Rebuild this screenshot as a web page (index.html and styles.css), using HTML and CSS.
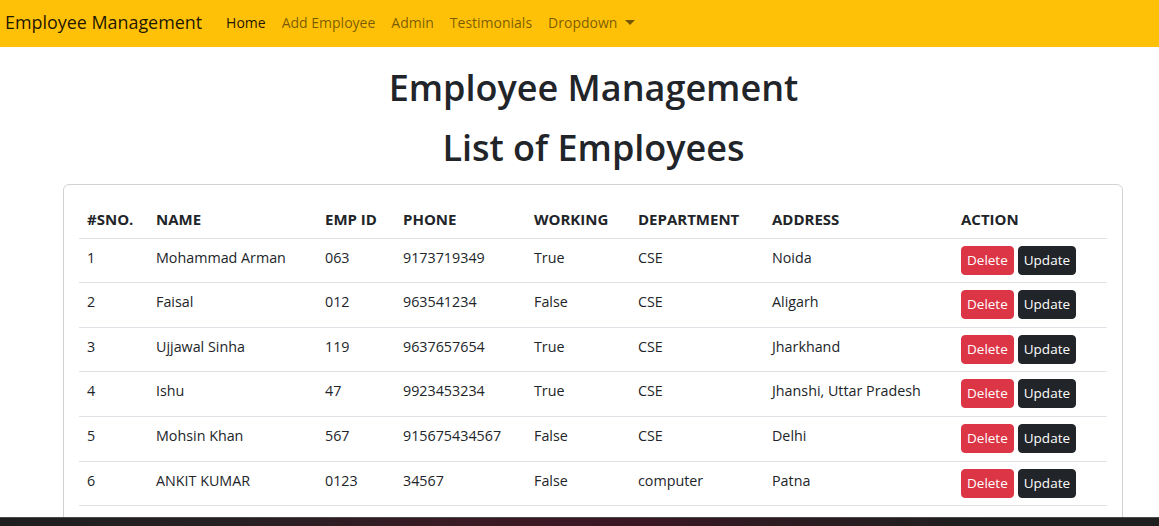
FILE: index.html
```html
<!DOCTYPE html>
<html lang="en">
<head>
<meta charset="utf-8">
<title>Employee Management</title>
<link rel="stylesheet" href="styles.css">
</head>
<body>
<nav class="navbar">
  <a class="brand" href="#">Employee Management</a>
  <ul class="nav">
    <li><a class="nav-link active" href="#">Home</a></li>
    <li><a class="nav-link" href="#">Add Employee</a></li>
    <li><a class="nav-link" href="#">Admin</a></li>
    <li><a class="nav-link" href="#">Testimonials</a></li>
    <li><a class="nav-link dropdown" href="#">Dropdown<span class="caret"></span></a></li>
  </ul>
</nav>
<main class="main">
  <h1 class="title">Employee Management</h1>
  <h1 class="title">List of Employees</h1>
  <div class="card">
    <table class="table">
      <colgroup>
        <col class="c-sno"><col class="c-name"><col class="c-id"><col class="c-phone"><col class="c-work"><col class="c-dept"><col class="c-addr"><col class="c-act">
      </colgroup>
      <thead>
        <tr><th>#SNO.</th><th>NAME</th><th>EMP ID</th><th>PHONE</th><th>WORKING</th><th>DEPARTMENT</th><th>ADDRESS</th><th>ACTION</th></tr>
      </thead>
      <tbody>
        <tr><td>1</td><td>Mohammad Arman</td><td>063</td><td>9173719349</td><td>True</td><td>CSE</td><td>Noida</td><td class="actions"><button class="btn btn-danger">Delete</button><button class="btn btn-dark">Update</button></td></tr>
        <tr><td>2</td><td>Faisal</td><td>012</td><td>963541234</td><td>False</td><td>CSE</td><td>Aligarh</td><td class="actions"><button class="btn btn-danger">Delete</button><button class="btn btn-dark">Update</button></td></tr>
        <tr><td>3</td><td>Ujjawal Sinha</td><td>119</td><td>9637657654</td><td>True</td><td>CSE</td><td>Jharkhand</td><td class="actions"><button class="btn btn-danger">Delete</button><button class="btn btn-dark">Update</button></td></tr>
        <tr><td>4</td><td>Ishu</td><td>47</td><td>9923453234</td><td>True</td><td>CSE</td><td>Jhanshi, Uttar Pradesh</td><td class="actions"><button class="btn btn-danger">Delete</button><button class="btn btn-dark">Update</button></td></tr>
        <tr><td>5</td><td>Mohsin Khan</td><td>567</td><td>915675434567</td><td>False</td><td>CSE</td><td>Delhi</td><td class="actions"><button class="btn btn-danger">Delete</button><button class="btn btn-dark">Update</button></td></tr>
        <tr><td>6</td><td>ANKIT KUMAR</td><td>0123</td><td>34567</td><td>False</td><td>computer</td><td>Patna</td><td class="actions"><button class="btn btn-danger">Delete</button><button class="btn btn-dark">Update</button></td></tr>
      </tbody>
    </table>
  </div>
</main>
<div class="taskbar"></div>
</body>
</html>
```

FILE: styles.css
```css
* { box-sizing: border-box; }
html, body { margin: 0; padding: 0; }
body {
  height: 526px;
  overflow: hidden;
  display: flex;
  flex-direction: column;
  font-family: "Segoe UI", "Open Sans", "Noto Sans", sans-serif;
  font-size: 14.3px;
  color: #212529;
  background: #fff;
}
.navbar {
  height: 47px;
  flex: none;
  background: #ffc107;
  display: flex;
  align-items: center;
  padding: 0 0 3px 5px;
}
.brand {
  font-size: 17.9px;
  color: rgba(0,0,0,0.9);
  text-decoration: none;
  margin-right: 16px;
}
.nav {
  list-style: none;
  margin: 0;
  padding: 0;
  display: flex;
}
.nav-link {
  display: block;
  padding: 8px;
  font-size: 14px;
  color: rgba(0,0,0,0.55);
  text-decoration: none;
}
.nav-link.active { color: rgba(0,0,0,0.9); }
.caret {
  display: inline-block;
  margin-left: 8px;
  vertical-align: 3px;
  border-top: 5px solid;
  border-left: 5px solid transparent;
  border-right: 5px solid transparent;
}
.main {
  flex: 1;
  overflow: hidden;
  padding-top: 17px;
}
.title {
  margin: 0 0 12px;
  text-align: center;
  font-size: 36px;
  font-weight: 600;
  line-height: 48px;
  padding-left: 28px;
  color: #212529;
}
.card {
  margin: 0 36px 0 63px;
  border: 1px solid rgba(0,0,0,0.175);
  border-radius: 6px;
  padding: 15px;
  height: 400px;
}
.table {
  width: 100%;
  border-collapse: collapse;
  table-layout: fixed;
}
.c-sno { width: 69px; }
.c-name { width: 169px; }
.c-id { width: 78px; }
.c-phone { width: 131px; }
.c-work { width: 104px; }
.c-dept { width: 134px; }
.c-addr { width: 189px; }
.table th, .table td {
  padding: 8px 8px 0;
  text-align: left;
  vertical-align: top;
  border-bottom: 1px solid #dee2e6;
  white-space: nowrap;
  line-height: 22px;
}
.table th {
  font-size: 15px;
  font-weight: 700;
  height: 38px;
}
.table td { height: 44.67px; }
.actions { padding-top: 7px !important; }
.btn {
  display: inline-block;
  height: 29px;
  padding: 0 5px;
  margin-right: 4px;
  border: 1px solid transparent;
  border-radius: 4px;
  font-family: inherit;
  font-size: 13.5px;
  line-height: 27px;
  color: #fff;
  vertical-align: top;
}
.btn-danger { background: #dc3545; border-color: #dc3545; }
.btn-dark { background: #212529; border-color: #212529; }
.taskbar {
  flex: none;
  height: 9px;
  border-top: 1px solid #4a4a4a;
  background: linear-gradient(90deg, #1f1e1f 0%, #262022 20%, #3a1a24 40%, #3a1723 55%, #2a1c20 70%, #1f1f1f 85%, #1f1f1f 100%);
}
```
